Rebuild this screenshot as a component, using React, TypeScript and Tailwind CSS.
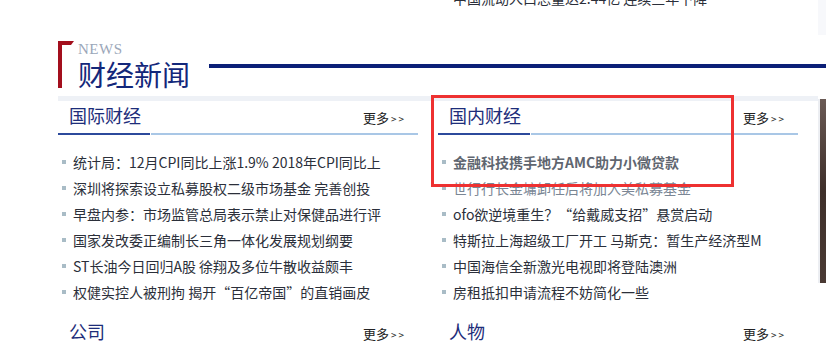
import React from "react";

interface Item {
  title: string;
  tone?: "hover" | "muted";
}

const intl: Item[] = [
  { title: "统计局：12月CPI同比上涨1.9% 2018年CPI同比上" },
  { title: "深圳将探索设立私募股权二级市场基金 完善创投" },
  { title: "早盘内参：市场监管总局表示禁止对保健品进行评" },
  { title: "国家发改委正编制长三角一体化发展规划纲要" },
  { title: "ST长油今日回归A股 徐翔及多位牛散收益颇丰" },
  { title: "权健实控人被刑拘 揭开“百亿帝国”的直销画皮" },
];

const domestic: Item[] = [
  { title: "金融科技携手地方AMC助力小微贷款", tone: "hover" },
  { title: "世行行长金墉卸任后将加入美私募基金", tone: "muted" },
  { title: "ofo欲逆境重生？“给戴威支招”悬赏启动" },
  { title: "特斯拉上海超级工厂开工 马斯克：暂生产经济型M" },
  { title: "中国海信全新激光电视即将登陆澳洲" },
  { title: "房租抵扣申请流程不妨简化一些" },
];

function NewsRow({ item }: { item: Item }) {
  const color =
    item.tone === "hover"
      ? "text-[#5f6670] font-bold"
      : item.tone === "muted"
      ? "text-[#7a8694]"
      : "text-[#2b2f3a]";
  return (
    <div className="flex items-center h-[26px]">
      <span className="w-[4px] h-[4px] ml-[4px] bg-[#a9bcc6] shrink-0" />
      <span className={`ml-[7px] text-[14px] leading-[26px] whitespace-nowrap ${color}`}>
        {item.title}
      </span>
    </div>
  );
}

function SectionHead({ title }: { title: string }) {
  return (
    <div>
      <div className="flex items-center justify-between h-[32px] pl-[11px] pr-[12px]">
        <span className="text-[18px] leading-[32px] text-[#1d2d7a] -mt-[4px]">{title}</span>
        <span className="flex items-baseline text-[13px] text-[#222] leading-none">
          更多
          <span className="ml-[2px] text-[10px] tracking-[2px]">&gt;&gt;</span>
        </span>
      </div>
      <div className="flex h-[2px]">
        <div className="w-[92px] bg-[#2c4a9c]" />
        <div className="w-[1px]" />
        <div className="flex-1 bg-[#a9c7e6]" />
      </div>
    </div>
  );
}

function Column({ title, items }: { title: string; items: Item[] }) {
  return (
    <div>
      <SectionHead title={title} />
      <div className="pt-[14px] pb-[12px]">
        {items.map((it, i) => (
          <NewsRow key={i} item={it} />
        ))}
      </div>
    </div>
  );
}

export default function App() {
  return (
    <div className="relative w-[826px] h-[343px] overflow-hidden bg-white font-['Noto_Sans_CJK_SC','Noto_Sans',sans-serif]">
      <div className="flex">
        <div className="w-[818px] pl-[58px]">
          {/* tail of the previous list */}
          <div className="-mt-[15px] grid grid-cols-2 gap-x-5 w-[740px]">
            <div />
            <NewsRow item={{ title: "中国流动人口总量达2.44亿 连续三年下降" }} />
          </div>

          {/* section header */}
          <div className="flex items-start mt-[30px] -mr-[8px]">
            <svg width="16" height="47" viewBox="0 0 16 47" className="shrink-0">
              <path d="M0 0 H16 L13 4 H4 V47 H0 Z" fill="#a30f1d" />
            </svg>
            <div className="ml-[4px]">
              <div className="font-['Liberation_Serif',serif] text-[15px] leading-[15px] text-[#9ba7b9] tracking-[0.5px] pt-[1px]">
                NEWS
              </div>
              <div className="mt-[3px] text-[28px] leading-[28px] text-[#13277a]">财经新闻</div>
            </div>
            <div className="flex-1 h-[4px] bg-[#0b1f77] ml-[19px] mt-[23px]" />
          </div>

          <div className="mt-[8px] h-[5px] w-[760px] bg-[#eef1f6]" />

          <div className="grid grid-cols-2 gap-x-5 w-[740px]">
            <Column title="国际财经" items={intl} />
            <Column title="国内财经" items={domestic} />
            <SectionHead title="公司" />
            <SectionHead title="人物" />
          </div>
        </div>

        {/* edge of the sidebar */}
        <div className="w-[8px]">
          <div className="h-[35px] bg-[#f7f8fb]" />
          <div className="h-[64px]" />
          <div className="flex h-[184px]">
            <div className="w-[2px] bg-[#eceef2]" />
            <div className="flex-1 bg-gradient-to-b from-[#6a5a55] via-[#3e2f2a] to-[#4a3a34]" />
          </div>
        </div>
      </div>

      {/* annotation box */}
      <div className="absolute left-[431px] top-[95px] w-[303px] h-[92px] border-[3px] border-[#ee3131]" />
    </div>
  );
}
